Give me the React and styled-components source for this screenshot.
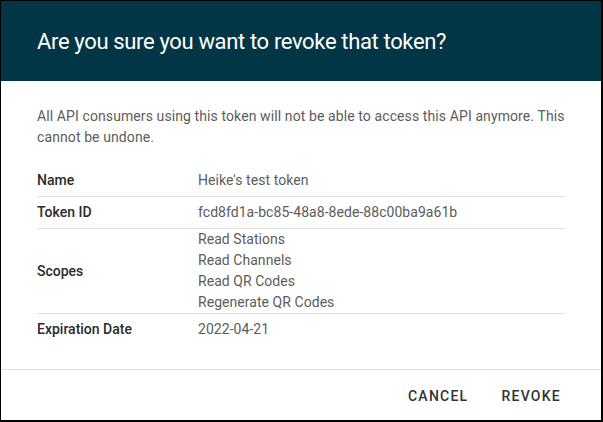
import React from "react";
import styled, { createGlobalStyle } from "styled-components";

const Global = createGlobalStyle`
  html, body { margin: 0; padding: 0; background: #fff; }
  body { font-family: Roboto, "Liberation Sans", Arial, sans-serif; }
  * { box-sizing: border-box; }
`;

const Frame = styled.div`
  width: 603px;
  height: 422px;
  border-style: solid;
  border-color: #000;
  border-width: 1px 2px 2px 1px;
  display: flex;
  flex-direction: column;
  background: #fff;
  overflow: hidden;
`;

const Header = styled.header`
  height: 80px;
  flex: none;
  background: #023646;
  display: flex;
  align-items: center;
  padding: 0 36px;
`;

const Title = styled.h2`
  margin: 0;
  color: #fff;
  font-size: 22px;
  font-weight: 400;
  letter-spacing: -0.35px;
`;

const Body = styled.section`
  flex: 1;
  padding: 25px 36px 0 36px;
`;

const Description = styled.p`
  margin: 0 0 17px 0;
  font-size: 14px;
  line-height: 21px;
  letter-spacing: 0.1px;
  color: #5c5c5c;
  max-width: 540px;
`;

const Table = styled.div`
  display: flex;
  flex-direction: column;
`;

const Row = styled.div`
  display: grid;
  grid-template-columns: 161px 1fr;
  align-items: center;
  padding: ${(p) => (p.$multi ? "0" : "5px 0")};
  border-bottom: ${(p) => (p.$last ? "none" : "1px solid #e0e0e0")};
`;

const Label = styled.div`
  font-size: 14px;
  font-weight: 500;
  line-height: 21px;
  color: #2b2b2b;
`;

const Value = styled.div`
  font-size: 14px;
  line-height: 21px;
  letter-spacing: 0.05px;
  color: #5c5c5c;
  display: flex;
  flex-direction: column;
`;

const Footer = styled.footer`
  height: 51px;
  flex: none;
  border-top: 1px solid #e0e0e0;
  display: flex;
  justify-content: flex-end;
  align-items: center;
  gap: 9px;
  padding: 2px 28px 0 0;
`;

const Button = styled.button`
  background: none;
  border: none;
  font-family: Roboto, "Liberation Sans", Arial, sans-serif;
  font-size: 14px;
  font-weight: 500;
  letter-spacing: 1.25px;
  text-transform: uppercase;
  color: #333;
  padding: 8px 12px;
  cursor: pointer;
`;

const rows = [
  { label: "Name", values: ["Heike's test token"] },
  { label: "Token ID", values: ["fcd8fd1a-bc85-48a8-8ede-88c00ba9a61b"] },
  {
    label: "Scopes",
    values: ["Read Stations", "Read Channels", "Read QR Codes", "Regenerate QR Codes"],
  },
  { label: "Expiration Date", values: ["2022-04-21"] },
];

export default function App() {
  return (
    <>
      <Global />
      <Frame>
        <Header>
          <Title>Are you sure you want to revoke that token?</Title>
        </Header>
        <Body>
          <Description>
            All API consumers using this token will not be able to access this API anymore. This
            cannot be undone.
          </Description>
          <Table>
            {rows.map((r, i) => (
              <Row key={r.label} $multi={r.values.length > 1} $last={i === rows.length - 1}>
                <Label>{r.label}</Label>
                <Value>
                  {r.values.map((v) => (
                    <span key={v}>{v}</span>
                  ))}
                </Value>
              </Row>
            ))}
          </Table>
        </Body>
        <Footer>
          <Button>Cancel</Button>
          <Button>Revoke</Button>
        </Footer>
      </Frame>
    </>
  );
}
